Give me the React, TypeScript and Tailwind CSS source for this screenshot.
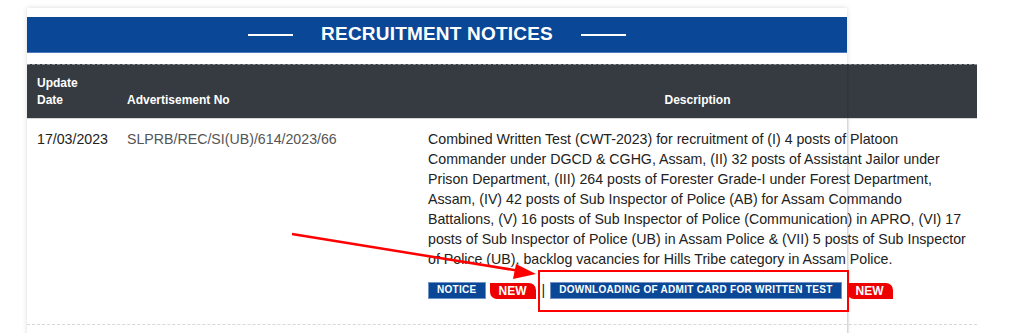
import React from "react"

const desc =
  "Combined Written Test (CWT-2023) for recruitment of (I) 4 posts of Platoon Commander under DGCD & CGHG, Assam, (II) 32 posts of Assistant Jailor under Prison Department, (III) 264 posts of Forester Grade-I under Forest Department, Assam, (IV) 42 posts of Sub Inspector of Police (AB) for Assam Commando Battalions, (V) 16 posts of Sub Inspector of Police (Communication) in APRO, (VI) 17 posts of Sub Inspector of Police (UB) in Assam Police & (VII) 5 posts of Sub Inspector of Police (UB), backlog vacancies for Hills Tribe category in Assam Police."

function NewBadge() {
  return (
    <span className="inline-flex items-center h-[16px] px-[9px] bg-[#ee0000] text-white text-[12px] font-bold leading-none rounded-tr-[7px] rounded-bl-[7px]">
      NEW
    </span>
  )
}

function BlueBtn({ children }: { children: React.ReactNode }) {
  return (
    <span className="inline-flex items-center h-[17px] px-[8px] bg-[#0a4897] border border-[#6f93c6] text-white text-[10px] font-bold tracking-[0.3px] leading-none">
      {children}
    </span>
  )
}

export default function App() {
  return (
    <div className="relative w-[1024px] h-[333px] overflow-hidden bg-white font-['Liberation_Sans',Arial,sans-serif]">
      <div className="pl-[27px] pt-[8px]">
        <div className="relative w-[820px] bg-white shadow-[0_0_5px_rgba(0,0,0,0.15)]">
          <div className="pt-[9px]">
            <div className="h-[36px] bg-[#0a4897] border-b border-[#4a78b8] flex items-center justify-center gap-[28px]">
              <span className="w-[45px] h-[2px] bg-white" />
              <h1 className="text-white text-[19px] font-bold tracking-[0.2px]">RECRUITMENT NOTICES</h1>
              <span className="w-[45px] h-[2px] bg-white" />
            </div>
          </div>
          <div className="h-[11px]" />

          <div className="w-[950px]">
            {/* header */}
            <div className="flex items-end h-[54px] bg-[#363a41] border-t border-dashed border-[#8a8d92] text-white text-[12px] font-bold leading-[17px] pb-[9px]">
              <div className="w-[90px] pl-[10px]">
                Update
                <br />
                Date
              </div>
              <div className="w-[301px] pl-[10px]">Advertisement No</div>
              <div className="flex-1 text-center">Description</div>
            </div>
            <div className="h-[1px] bg-[#d6d6d6]" />

            {/* row */}
            <div className="flex text-[14.2px] leading-[20px] pt-[10px] pb-[24px] border-b border-dashed border-[#d8d8d8]">
              <div className="w-[90px] pl-[10px] text-[#222]">17/03/2023</div>
              <div className="w-[301px] pl-[10px] text-[#555]">SLPRB/REC/SI(UB)/614/2023/66</div>
              <div className="flex-1 pl-[10px] pr-[10px] text-[#222]">
                <p>{desc}</p>
                <div className="mt-[11px] flex items-center">
                  <BlueBtn>NOTICE</BlueBtn>
                  <span className="ml-[4px]">
                    <NewBadge />
                  </span>
                  <span className="text-[#222] text-[14px] leading-none ml-[6px] mr-[5px]">|</span>
                  <BlueBtn>DOWNLOADING OF ADMIT CARD FOR WRITTEN TEST</BlueBtn>
                  <span className="ml-[5px]">
                    <NewBadge />
                  </span>
                </div>
              </div>
            </div>
            <div className="h-[20px]" />
          </div>

          {/* card edge shadow that shows over overflowing table */}
          <div className="pointer-events-none absolute top-[56px] bottom-0 left-[820px] w-[2px] bg-[linear-gradient(to_right,rgba(0,0,0,0.12),rgba(0,0,0,0.03))]" />
        </div>
      </div>

      {/* annotation: red box and arrow */}
      <div className="pointer-events-none absolute left-[538px] top-[270px] w-[311px] h-[42px] border-2 border-[#ff0000]" />
      <svg className="pointer-events-none absolute left-0 top-0" width="1024" height="333">
        <line x1="292" y1="234" x2="520" y2="271" stroke="#ff0000" strokeWidth="2.5" />
        <polygon points="536,274 516,264 513,279" fill="#ff0000" />
      </svg>
    </div>
  )
}
